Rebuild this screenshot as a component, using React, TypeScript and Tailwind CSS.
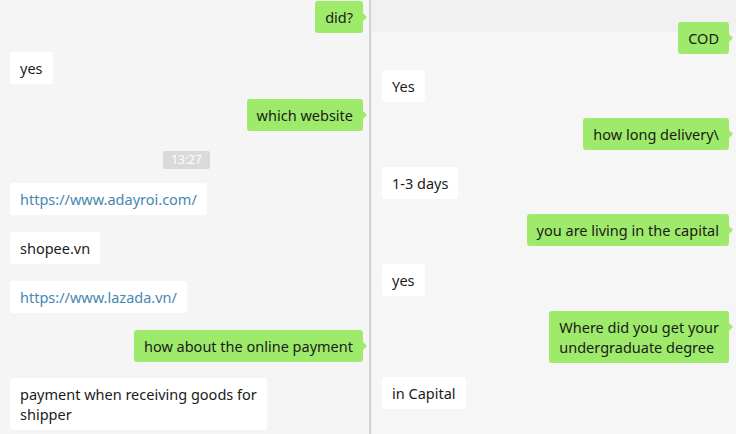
type Msg =
  | { kind: "me"; text: string[]; mt: string }
  | { kind: "them"; text: string[]; mt: string; link?: boolean }
  | { kind: "time"; text: string; mt: string };

const leftMessages: Msg[] = [
  { kind: "me", text: ["did?"], mt: "mt-[1px]" },
  { kind: "them", text: ["yes"], mt: "mt-[19px]" },
  { kind: "me", text: ["which website"], mt: "mt-[15px]" },
  { kind: "time", text: "13:27", mt: "mt-[20px]" },
  { kind: "them", text: ["https://www.adayroi.com/"], mt: "mt-[14px]", link: true },
  { kind: "them", text: ["shopee.vn"], mt: "mt-[17px]" },
  { kind: "them", text: ["https://www.lazada.vn/"], mt: "mt-[17px]", link: true },
  { kind: "me", text: ["how about the online payment"], mt: "mt-[17px]" },
  { kind: "them", text: ["payment when receiving goods for", "shipper"], mt: "mt-[16px]" },
];

const rightMessages: Msg[] = [
  { kind: "me", text: ["COD"], mt: "mt-[22px]" },
  { kind: "them", text: ["Yes"], mt: "mt-[16px]" },
  { kind: "me", text: ["how long delivery\\"], mt: "mt-[16px]" },
  { kind: "them", text: ["1-3 days"], mt: "mt-[17px]" },
  { kind: "me", text: ["you are living in the capital"], mt: "mt-[15px]" },
  { kind: "them", text: ["yes"], mt: "mt-[18px]" },
  { kind: "me", text: ["Where did you get your", "undergraduate degree"], mt: "mt-[15px]" },
  { kind: "them", text: ["in Capital"], mt: "mt-[14px]" },
];

const Lines = ({ text }: { text: string[] }) => (
  <>
    {text.map((line, i) => (
      <span key={i} className="block whitespace-nowrap">
        {line}
      </span>
    ))}
  </>
);

const Message = ({ msg }: { msg: Msg }) => {
  if (msg.kind === "time") {
    return (
      <div className={`flex justify-center ${msg.mt}`}>
        <span className="h-[18px] px-[8px] bg-[#dadada] text-white text-[12px] leading-[18px] rounded-[2px]">
          {msg.text}
        </span>
      </div>
    );
  }

  if (msg.kind === "me") {
    return (
      <div className={`flex justify-end ${msg.mt}`}>
        <div className="relative bg-[#9eea6a] text-[#1b1b1b] text-[14.5px] leading-[20px] px-[10px] py-[6px] rounded-[3px]">
          <Lines text={msg.text} />
          <span className="absolute top-[12px] -right-[4px] w-0 h-0 border-y-[4px] border-y-transparent border-l-[4px] border-l-[#9eea6a]" />
        </div>
      </div>
    );
  }

  return (
    <div className={`flex justify-start ${msg.mt}`}>
      <div
        className={`bg-white text-[14.5px] leading-[20px] px-[10px] py-[6px] rounded-[3px] ${
          msg.link ? "text-[#4688b0]" : "text-[#1b1b1b]"
        }`}
      >
        <Lines text={msg.text} />
      </div>
    </div>
  );
};

export default function App() {
  return (
    <div
      className="flex w-[736px] h-[434px] overflow-hidden bg-[#f5f5f5]"
      style={{ fontFamily: '"Noto Sans", "Open Sans", sans-serif' }}
    >
      {/* left conversation */}
      <div className="w-[369px] shrink-0 flex flex-col pl-[10px] pr-[6px]">
        {leftMessages.map((m, i) => (
          <Message key={i} msg={m} />
        ))}
      </div>

      <div className="w-[3px] shrink-0 bg-[#d2d2d2] border-r border-[#ececec]" />

      {/* right conversation */}
      <div className="flex-1 flex flex-col pl-[10px] pr-[7px] bg-[linear-gradient(#f1f1f1_0,#f1f1f1_32px,#f6f6f6_32px)]">
        {rightMessages.map((m, i) => (
          <Message key={i} msg={m} />
        ))}
      </div>
    </div>
  );
}
